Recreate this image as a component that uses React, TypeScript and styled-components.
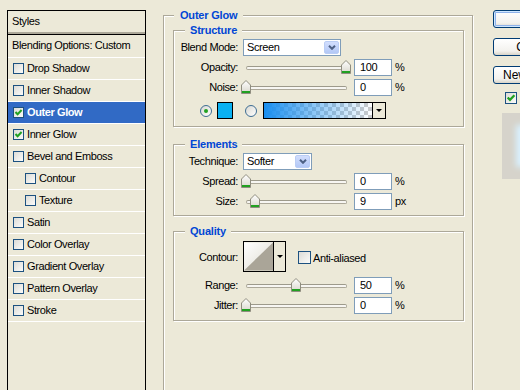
import React from "react";
import styled, { createGlobalStyle } from "styled-components";

const GlobalStyle = createGlobalStyle`
  html, body {
    margin: 0;
    background: #ece9d8;
  }
  body {
    font-family: "Liberation Sans", Arial, sans-serif;
    font-size: 11px;
    letter-spacing: -0.4px;
    color: #000;
  }
`;

type StyleItem = {
  name: string;
  checked?: boolean;
  selected?: boolean;
  sub?: boolean;
};

const styleItems: StyleItem[] = [
  { name: "Drop Shadow" },
  { name: "Inner Shadow" },
  { name: "Outer Glow", checked: true, selected: true },
  { name: "Inner Glow", checked: true },
  { name: "Bevel and Emboss" },
  { name: "Contour", sub: true },
  { name: "Texture", sub: true },
  { name: "Satin" },
  { name: "Color Overlay" },
  { name: "Gradient Overlay" },
  { name: "Pattern Overlay" },
  { name: "Stroke" },
];

const Window = styled.div`
  display: flex;
  align-items: flex-start;
  width: 520px;
  height: 390px;
  overflow: hidden;
`;

/* ---- left list ---- */

const StyleList = styled.div`
  flex: none;
  width: 139px;
  height: 400px;
  margin: 10px 0 0 7px;
  box-sizing: border-box;
  border: 1px solid #000;
`;

const ListHeader = styled.div`
  height: 21px;
  line-height: 20px;
  padding-left: 4px;
  border-bottom: 2px solid #aca899;
`;

const BlendRow = styled.div`
  height: 22px;
  line-height: 21px;
  padding-left: 4px;
  border-top: 1px solid #000;
  border-bottom: 1px solid #fff;
`;

const ListRow = styled.div<{ $selected?: boolean; $sub?: boolean }>`
  display: flex;
  align-items: center;
  gap: 3px;
  height: 21px;
  padding-left: ${(p) => (p.$sub ? 17 : 5)}px;
  border-bottom: 1px solid #fff;
  background: ${(p) => (p.$selected ? "#316ac5" : "transparent")};
  color: ${(p) => (p.$selected ? "#fff" : "#000")};
  font-weight: ${(p) => (p.$selected ? "bold" : "normal")};
  span + & {
    margin: 0;
  }
`;

const RowText = styled.span`
  margin-top: -1px;
`;

const CheckBox = styled.span<{ $size: number }>`
  flex: none;
  display: inline-flex;
  align-items: center;
  justify-content: center;
  box-sizing: border-box;
  width: ${(p) => p.$size}px;
  height: ${(p) => p.$size}px;
  border: 1px solid #1c5180;
  background: linear-gradient(135deg, #dcdcd7, #fbfbf9);
`;

const Check = ({ size = 11, checked = false }: { size?: number; checked?: boolean }) => (
  <CheckBox $size={size}>
    {checked && (
      <svg width={size - 2} height={size - 2} viewBox="0 0 9 9">
        <path d="M1.5 4 L3.6 6.2 L7.6 2" stroke="#21a121" strokeWidth="2" fill="none" />
      </svg>
    )}
  </CheckBox>
);

/* ---- group boxes ---- */

const Main = styled.div`
  flex: none;
  display: flex;
  flex-direction: column;
  width: 310px;
  height: 400px;
  margin: 15px 0 0 17px;
  padding: 0 8px 0 9px;
  box-sizing: border-box;
  border: 1px solid #aca899;
  box-shadow: inset 1px 1px 0 #fff, 1px 1px 0 #fff;
`;

const Group = styled.div<{ $top: number; $bottom: number }>`
  display: flex;
  flex-direction: column;
  width: 291px;
  margin-top: ${(p) => p.$top}px;
  padding-bottom: ${(p) => p.$bottom}px;
  box-sizing: border-box;
  border: 1px solid #aca899;
  box-shadow: inset 1px 1px 0 #fff, 1px 1px 0 #fff;
`;

const Legend = styled.div<{ $outer?: boolean }>`
  align-self: flex-start;
  height: 13px;
  line-height: 13px;
  margin: -7px 0 0 ${(p) => (p.$outer ? 1 : 11)}px;
  padding: 0 ${(p) => (p.$outer ? 6 : 5)}px;
  background: #ece9d8;
  color: #0046d5;
  font-weight: bold;
  letter-spacing: -0.2px;
`;

const Row = styled.div<{ $top: number; $height?: number; $indent?: number }>`
  display: flex;
  align-items: center;
  height: ${(p) => p.$height ?? 18}px;
  margin-top: ${(p) => p.$top}px;
  padding-left: ${(p) => p.$indent ?? 0}px;
`;

const Label = styled.span`
  flex: none;
  width: 64px;
  text-align: right;
  white-space: nowrap;
`;

const SelectBox = styled.div<{ $width: number }>`
  flex: none;
  display: flex;
  align-items: center;
  width: ${(p) => p.$width}px;
  height: 17px;
  margin-left: 5px;
  padding: 0 1px 0 3px;
  box-sizing: border-box;
  border: 1px solid #7f9db9;
  background: #fff;
`;

const DropButton = styled.span`
  display: flex;
  align-items: center;
  justify-content: center;
  width: 15px;
  height: 13px;
  margin-left: auto;
  box-sizing: border-box;
  border: 1px solid #bacdf5;
  border-radius: 2px;
  background: linear-gradient(#d2defd, #b3c8f6);
`;

const Select = ({ value, width }: { value: string; width: number }) => (
  <SelectBox $width={width}>
    {value}
    <DropButton>
      <svg width="8" height="5" viewBox="0 0 8 5">
        <path d="M1 0.8 L4 3.8 L7 0.8" stroke="#4d6185" strokeWidth="2" fill="none" />
      </svg>
    </DropButton>
  </SelectBox>
);

const SliderBox = styled.div`
  flex: none;
  position: relative;
  display: flex;
  align-items: center;
  width: 110px;
  height: 18px;
  margin-left: 4px;
  padding: 2px 5px 0 4px;
  box-sizing: border-box;
`;

const Track = styled.div`
  flex: 1;
  height: 4px;
  box-sizing: border-box;
  border: 1px solid #aca899;
  border-top-color: #9d9a8b;
  border-radius: 2px;
  background: #f7f6f2;
`;

const Thumb = styled.svg`
  position: absolute;
  top: 2px;
`;

const Slider = ({ value }: { value: number }) => (
  <SliderBox>
    <Track />
    <Thumb width="10" height="14" viewBox="0 0 10 14" style={{ left: value - 1 }}>
      <defs>
        <linearGradient id="thumbFill" x1="0" y1="0" x2="0" y2="1">
          <stop offset="0" stopColor="#ffffff" />
          <stop offset="1" stopColor="#d8d6cb" />
        </linearGradient>
      </defs>
      <path d="M0.5 13.5 V5 L5 0.5 L9.5 5 V13.5 Z" fill="url(#thumbFill)" stroke="#8f8d7f" />
      <rect x="1" y="11" width="8" height="2" fill="#21a121" />
    </Thumb>
  </SliderBox>
);

const NumberBox = styled.div`
  flex: none;
  width: 38px;
  height: 17px;
  line-height: 15px;
  margin-left: 2px;
  padding-left: 5px;
  box-sizing: border-box;
  border: 1px solid #7f9db9;
  background: #fff;
`;

const Unit = styled.span`
  margin-left: 3px;
`;

const SliderRow = ({
  label,
  value,
  pos,
  unit = "%",
  top,
}: {
  label: string;
  value: string;
  pos: number;
  unit?: string;
  top: number;
}) => (
  <Row $top={top}>
    <Label>{label}</Label>
    <Slider value={pos} />
    <NumberBox>{value}</NumberBox>
    <Unit>{unit}</Unit>
  </Row>
);

const Radio = styled.span<{ $on?: boolean; $gap: number }>`
  flex: none;
  display: flex;
  align-items: center;
  justify-content: center;
  width: 12px;
  height: 12px;
  margin-left: ${(p) => p.$gap}px;
  box-sizing: border-box;
  border: 1px solid #3e6d93;
  border-radius: 50%;
  background: linear-gradient(135deg, #d8d8d2, #fff);
  &::after {
    content: "";
    display: ${(p) => (p.$on ? "block" : "none")};
    width: 4px;
    height: 4px;
    border-radius: 50%;
    background: #21a121;
  }
`;

const Swatch = styled.span`
  flex: none;
  width: 16px;
  height: 17px;
  margin-left: 5px;
  box-sizing: border-box;
  border: 1px solid #000;
  background: #0ab1f2;
`;

const GradientPicker = styled.div`
  flex: none;
  display: flex;
  width: 123px;
  height: 17px;
  margin-left: 6px;
  box-sizing: border-box;
  border: 1px solid #000;
`;

const GradientStrip = styled.span`
  flex: 1;
  background: linear-gradient(90deg, #1a8ff0, rgba(40, 150, 240, 0.55) 45%, rgba(120, 190, 245, 0) 100%),
    repeating-conic-gradient(#cbcbcb 0 25%, #fff 0 50%) 0 0 / 8px 8px;
`;

const ArrowCell = styled.span<{ $width: number }>`
  flex: none;
  display: flex;
  align-items: center;
  justify-content: center;
  width: ${(p) => p.$width}px;
  border-left: 1px solid #000;
  background: #ece9d8;
  &::after {
    content: "";
    border-left: 3px solid transparent;
    border-right: 3px solid transparent;
    border-top: 3px solid #000;
  }
`;

const ContourPicker = styled.div`
  flex: none;
  display: flex;
  width: 43px;
  height: 31px;
  margin-left: 5px;
  box-sizing: border-box;
  border: 1px solid #000;
  background: #ece9d8;
`;

const CheckLabel = styled.label`
  display: flex;
  align-items: center;
  gap: 2px;
  margin: 0 0 4px 12px;
  align-self: flex-start;
  padding-top: 10px;
`;

/* ---- right column ---- */

const SideColumn = styled.div`
  flex: none;
  display: flex;
  flex-direction: column;
  align-items: flex-start;
  margin: 10px 0 0 20px;
`;

const Button = styled.div<{ $primary?: boolean; $top: number }>`
  width: 84px;
  height: 18px;
  margin-top: ${(p) => p.$top}px;
  box-sizing: border-box;
  border: 1px solid #003c74;
  border-radius: 3px;
  background: linear-gradient(#ffffff, #f3f2ee 75%, #d8d4c8);
  box-shadow: ${(p) => (p.$primary ? "inset 0 0 0 1px #cee7ff, inset 0 0 0 2px #8fb2ea" : "none")};
  font-size: 12px;
  letter-spacing: 0;
  line-height: 16px;
  text-align: center;
  white-space: nowrap;
`;

const SideCheck = styled.div`
  margin: 8px 0 0 12px;
`;

const Preview = styled.div`
  display: flex;
  align-items: center;
  width: 66px;
  height: 66px;
  margin: 8px 0 0 9px;
  padding-left: 18px;
  box-sizing: border-box;
  background: #d6d3cb;
  &::before {
    content: "";
    width: 30px;
    height: 34px;
    background: #fff;
    box-shadow: 0 0 6px 4px #d9f1ff;
  }
`;

export default function App() {
  return (
    <>
      <GlobalStyle />
      <Window>
        <StyleList>
          <ListHeader>Styles</ListHeader>
          <BlendRow>Blending Options: Custom</BlendRow>
          {styleItems.map((item) => (
            <ListRow key={item.name} $selected={item.selected} $sub={item.sub}>
              <Check checked={item.checked} />
              <RowText>{item.name}</RowText>
            </ListRow>
          ))}
        </StyleList>

        <Main>
          <Legend $outer>Outer Glow</Legend>

          <Group $top={8} $bottom={7}>
            <Legend>Structure</Legend>
            <Row $top={1}>
              <Label>Blend Mode:</Label>
              <Select value="Screen" width={98} />
            </Row>
            <SliderRow top={2} label="Opacity:" value="100" pos={100} />
            <SliderRow top={2} label="Noise:" value="0" pos={0} />
            <Row $top={6} $height={17} $indent={26}>
              <Radio $on $gap={0} />
              <Swatch />
              <Radio $gap={12} />
              <GradientPicker>
                <GradientStrip />
                <ArrowCell $width={12} />
              </GradientPicker>
            </Row>
          </Group>

          <Group $top={17} $bottom={5}>
            <Legend>Elements</Legend>
            <Row $top={1}>
              <Label>Technique:</Label>
              <Select value="Softer" width={69} />
            </Row>
            <SliderRow top={2} label="Spread:" value="0" pos={0} />
            <SliderRow top={2} label="Size:" value="9" pos={9} unit="px" />
          </Group>

          <Group $top={15} $bottom={6}>
            <Legend>Quality</Legend>
            <Row $top={3} $height={31}>
              <Label>Contour:</Label>
              <ContourPicker>
                <svg width="30" height="29" viewBox="0 0 30 29">
                  <defs>
                    <linearGradient id="contourBg" x1="0" y1="0" x2="1" y2="1">
                      <stop offset="0" stopColor="#ffffff" />
                      <stop offset="1" stopColor="#dedbd0" />
                    </linearGradient>
                  </defs>
                  <rect width="30" height="29" fill="url(#contourBg)" />
                  <polygon points="0,29 30,0 30,29" fill="#aaa598" />
                </svg>
                <ArrowCell $width={11} />
              </ContourPicker>
              <CheckLabel>
                <Check size={13} />
                Anti-aliased
              </CheckLabel>
            </Row>
            <SliderRow top={4} label="Range:" value="50" pos={50} />
            <SliderRow top={2} label="Jitter:" value="0" pos={0} />
          </Group>
        </Main>

        <SideColumn>
          <Button $primary $top={0}>OK</Button>
          <Button $top={10}>Cancel</Button>
          <Button $top={10}>New Style...</Button>
          <SideCheck>
            <Check size={12} checked />
          </SideCheck>
          <Preview />
        </SideColumn>
      </Window>
    </>
  );
}
